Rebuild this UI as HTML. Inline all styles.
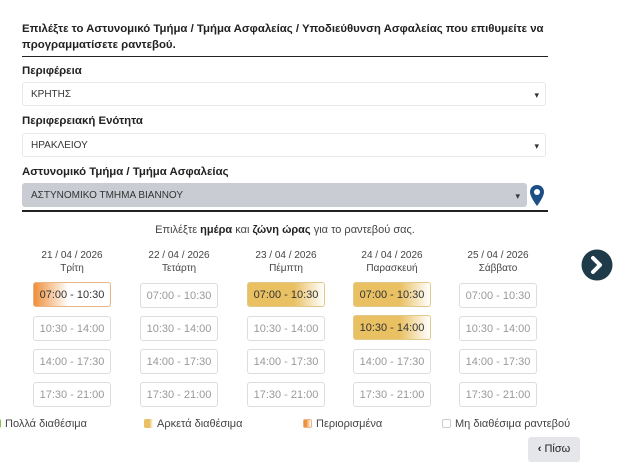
<!DOCTYPE html>
<html><head><meta charset="utf-8"><style>
body{margin:0;width:640px;height:471px;background:#fff;font-family:"Liberation Sans","DejaVu Sans",sans-serif;color:#222;position:relative;overflow:hidden}
.a{position:absolute}
.t{font-size:11.4px;font-weight:bold;left:22px;line-height:16px}
.lbl{font-size:11.4px;font-weight:bold;left:22px}
.sel{left:22px;width:524px;height:24px;border:1px solid #e8e8e8;border-radius:3px;font-size:10px;line-height:24px;padding-left:8px;box-sizing:border-box;color:#333}
.sel:after{content:"▾";position:absolute;right:6px;font-size:9px;color:#333}
.hr{left:22px;width:526px;height:2px;background:#222}
.d{font-size:10px;color:#444;text-align:center;width:100px;line-height:13px}
.b{width:78px;height:25px;border:1px solid #ddd;border-radius:3px;box-sizing:border-box;font-size:11px;color:#999;text-align:center;line-height:24px}
.y{background:linear-gradient(90deg,#e9c062 0%,#e9c062 60%,#fff 100%);color:#333;border-color:#e2c98a}
.o{background:linear-gradient(90deg,#ef8f3a 0%,#fff 45%);color:#333;border-color:#e7b586}
.lg{font-size:11px;color:#444;top:418px}
.sw{display:inline-block;width:9px;height:9px;border-radius:2px;vertical-align:-1px;margin-right:4px}
</style></head><body>
<div class="a t" style="top:21px">Επιλέξτε το Αστυνομικό Τμήμα / Τμήμα Ασφαλείας / Υποδιεύθυνση Ασφαλείας που επιθυμείτε να<br>προγραμματίσετε ραντεβού.</div>
<div class="a hr" style="top:56px;height:1px"></div>
<div class="a lbl" style="top:65px">Περιφέρεια</div>
<div class="a sel" style="top:82px">ΚΡΗΤΗΣ</div>
<div class="a lbl" style="top:115px">Περιφερειακή Ενότητα</div>
<div class="a sel" style="top:133px">ΗΡΑΚΛΕΙΟΥ</div>
<div class="a lbl" style="top:166px">Αστυνομικό Τμήμα / Τμήμα Ασφαλείας</div>
<div class="a sel" style="top:183px;width:505px;background:#c9cdd3;border-color:#c9cdd3">ΑΣΤΥΝΟΜΙΚΟ ΤΜΗΜΑ ΒΙΑΝΝΟΥ</div>
<svg class="a" style="left:530px;top:185px" width="14" height="21" viewBox="0 0 14 21"><path d="M7 0C3 0 0 3 0 7c0 5 7 14 7 14s7-9 7-14c0-4-3-7-7-7z" fill="#1d4f86"/><circle cx="7" cy="7" r="3" fill="#fff"/></svg>
<div class="a hr" style="top:210px"></div>
<div class="a" style="left:0;width:570px;text-align:center;top:224px;font-size:11px;color:#444">Επιλέξτε <b style="color:#222">ημέρα</b> και <b style="color:#222">ζώνη ώρας</b> για το ραντεβού σας.</div>

<div class="a d" style="left:22px;top:249px">21 / 04 / 2026<br>Τρίτη</div>
<div class="a d" style="left:129px;top:249px">22 / 04 / 2026<br>Τετάρτη</div>
<div class="a d" style="left:236px;top:249px">23 / 04 / 2026<br>Πέμπτη</div>
<div class="a d" style="left:342px;top:249px">24 / 04 / 2026<br>Παρασκευή</div>
<div class="a d" style="left:448px;top:249px">25 / 04 / 2026<br>Σάββατο</div>

<div class="a b o" style="left:33px;top:282px">07:00 - 10:30</div>
<div class="a b" style="left:33px;top:316px">10:30 - 14:00</div>
<div class="a b" style="left:33px;top:349px">14:00 - 17:30</div>
<div class="a b" style="left:33px;top:382px">17:30 - 21:00</div>
<div class="a b" style="left:140px;top:283px">07:00 - 10:30</div>
<div class="a b" style="left:140px;top:316px">10:30 - 14:00</div>
<div class="a b" style="left:140px;top:349px">14:00 - 17:30</div>
<div class="a b" style="left:140px;top:382px">17:30 - 21:00</div>
<div class="a b y" style="left:247px;top:282px">07:00 - 10:30</div>
<div class="a b" style="left:247px;top:316px">10:30 - 14:00</div>
<div class="a b" style="left:247px;top:349px">14:00 - 17:30</div>
<div class="a b" style="left:247px;top:382px">17:30 - 21:00</div>
<div class="a b y" style="left:353px;top:282px">07:00 - 10:30</div>
<div class="a b y" style="left:353px;top:315px">10:30 - 14:00</div>
<div class="a b" style="left:353px;top:349px">14:00 - 17:30</div>
<div class="a b" style="left:353px;top:382px">17:30 - 21:00</div>
<div class="a b" style="left:459px;top:283px">07:00 - 10:30</div>
<div class="a b" style="left:459px;top:316px">10:30 - 14:00</div>
<div class="a b" style="left:459px;top:349px">14:00 - 17:30</div>
<div class="a b" style="left:459px;top:382px">17:30 - 21:00</div>

<svg class="a" style="left:581px;top:249px" width="32" height="32" viewBox="0 0 32 32"><circle cx="16" cy="16" r="15.5" fill="#1f3b4a"/><path d="M12 9l7 7-7 7" stroke="#fff" stroke-width="4" fill="none" stroke-linecap="round" stroke-linejoin="round"/></svg>

<div class="a lg" style="left:-4px"><span class="sw" style="background:#8bc34a;width:5px"></span>Πολλά διαθέσιμα</div>
<div class="a lg" style="left:144px"><span class="sw" style="background:linear-gradient(90deg,#e9c062 60%,#fff)"></span>Αρκετά διαθέσιμα</div>
<div class="a lg" style="left:303px"><span class="sw" style="background:linear-gradient(90deg,#ef8f3a 30%,#fff);border:1px solid #e7b586;box-sizing:border-box"></span>Περιορισμένα</div>
<div class="a lg" style="left:442px"><span class="sw" style="border:1px solid #ccc;box-sizing:border-box"></span>Μη διαθέσιμα ραντεβού</div>
<div class="a" style="left:528px;top:437px;width:52px;height:25px;background:#e4e6ea;border-radius:3px;font-size:11px;line-height:25px;text-align:center;color:#222"><b>‹</b> Πίσω</div>
</body></html>
